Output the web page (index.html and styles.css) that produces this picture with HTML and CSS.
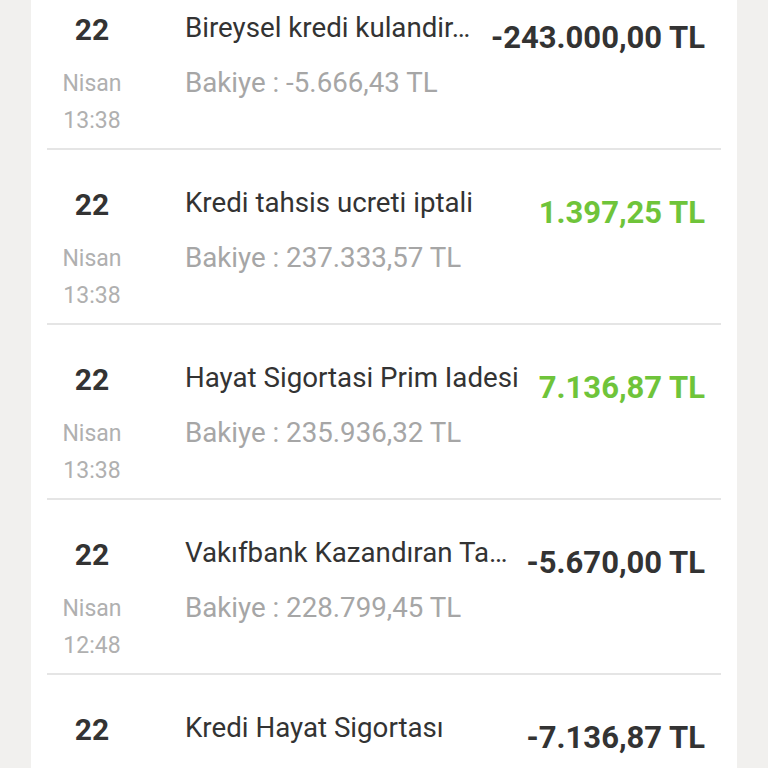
FILE: index.html
```html
<!DOCTYPE html>
<html lang="tr">
<head>
<meta charset="utf-8">
<title>Hesap Hareketleri</title>
<link rel="stylesheet" href="styles.css">
</head>
<body>
<div class="card">
  <ul class="list">
    <li class="row">
      <div class="date"><div class="day">22</div><div class="month">Nisan</div><div class="time">13:38</div></div>
      <div class="info"><div class="desc">Bireysel kredi kulandir…</div><div class="bal">Bakiye : -5.666,43 TL</div></div>
      <div class="amount neg">-243.000,00 TL</div>
    </li>
    <li class="row">
      <div class="date"><div class="day">22</div><div class="month">Nisan</div><div class="time">13:38</div></div>
      <div class="info"><div class="desc">Kredi tahsis ucreti iptali</div><div class="bal">Bakiye : 237.333,57 TL</div></div>
      <div class="amount pos">1.397,25 TL</div>
    </li>
    <li class="row">
      <div class="date"><div class="day">22</div><div class="month">Nisan</div><div class="time">13:38</div></div>
      <div class="info"><div class="desc">Hayat Sigortasi Prim Iadesi</div><div class="bal">Bakiye : 235.936,32 TL</div></div>
      <div class="amount pos">7.136,87 TL</div>
    </li>
    <li class="row">
      <div class="date"><div class="day">22</div><div class="month">Nisan</div><div class="time">12:48</div></div>
      <div class="info"><div class="desc">Vakıfbank Kazandıran Ta…</div><div class="bal">Bakiye : 228.799,45 TL</div></div>
      <div class="amount neg">-5.670,00 TL</div>
    </li>
    <li class="row">
      <div class="date"><div class="day">22</div></div>
      <div class="info"><div class="desc">Kredi Hayat Sigortası</div></div>
      <div class="amount neg">-7.136,87 TL</div>
    </li>
  </ul>
</div>
</body>
</html>
```
FILE: styles.css
```css
html, body {
  margin: 0;
  padding: 0;
  height: 100%;
  overflow: hidden;
  background: #f1f0ee;
  font-family: Roboto, "Noto Sans", sans-serif;
}
.card {
  margin: 0 31px;
  background: #ffffff;
  padding: 0 16px;
  min-height: 100%;
}
.list {
  list-style: none;
  margin: -25px 0 0 0;
  padding: 0;
}
.row {
  display: flex;
  align-items: flex-start;
  box-sizing: border-box;
  height: 175px;
  padding: 30px 16px 0 0;
  border-bottom: 2px solid #e5e5e5;
}
.date {
  width: 90px;
  flex: none;
  text-align: center;
}
.day {
  font-size: 30px;
  line-height: 50px;
  font-weight: 700;
  color: #333333;
}
.month, .time {
  font-size: 23px;
  line-height: 37px;
  color: #b0b0b0;
}
.month {
  margin-top: 10px;
}
.info {
  flex: 1;
  min-width: 0;
  margin-left: 48px;
}
.desc {
  margin-top: 5px;
  font-size: 27.7px;
  line-height: 36px;
  color: #333333;
  white-space: nowrap;
  overflow: hidden;
  text-overflow: ellipsis;
}
.bal {
  margin-top: 19px;
  font-size: 27.7px;
  line-height: 36px;
  color: #a6a6a6;
  white-space: nowrap;
}
.amount {
  flex: none;
  margin-left: 8px;
  margin-top: 15px;
  font-size: 31px;
  line-height: 36px;
  font-weight: 700;
  white-space: nowrap;
}
.neg { color: #333333; }
.pos { color: #6fc43a; }
```
